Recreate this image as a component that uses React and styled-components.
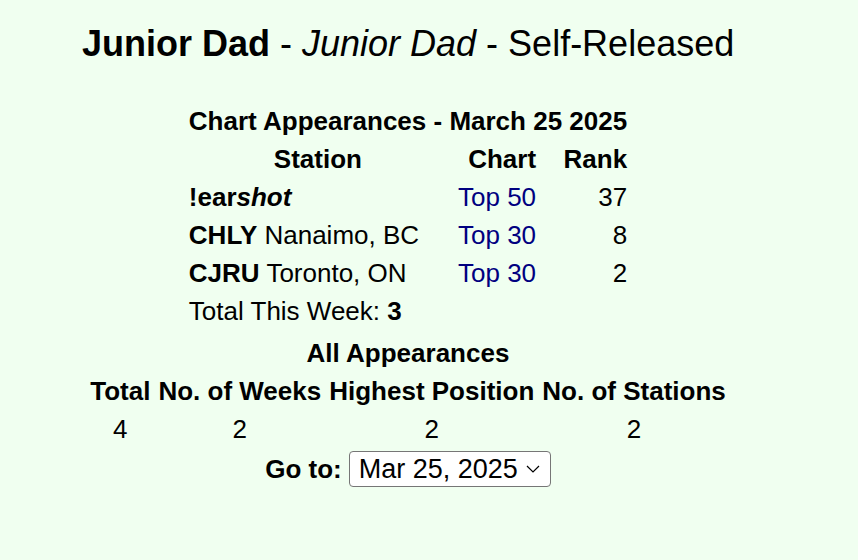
import React from "react";
import styled, { createGlobalStyle } from "styled-components";

const Global = createGlobalStyle`
  html, body { background: #f0fff0; }
  body { margin: 8px; font-family: "Liberation Sans", Arial, Helvetica, sans-serif; color: #000; }
`;

const Page = styled.div`
  width: 800px;
  display: flex;
  flex-direction: column;
  align-items: center;
`;

const Title = styled.h1`
  align-self: flex-start;
  margin: 16px 0 0 74px;
  font-size: 36px;
  font-weight: normal;
  line-height: 40px;
  white-space: nowrap;
`;

const Table = styled.table`
  border-collapse: collapse;
  border-spacing: 0;
  font-size: 26px;
  table-layout: ${(p) => (p.$fixed ? "fixed" : "auto")};
  width: ${(p) => (p.$width ? `${p.$width}px` : "auto")};
  margin-top: ${(p) => p.$mt || 0}px;
`;

const Caption = styled.caption`
  font-weight: bold;
  text-align: ${(p) => p.$align || "left"};
  padding: 5px 0;
  line-height: 28px;
  white-space: nowrap;
`;

const Col = styled.col`
  width: ${(p) => p.$w}px;
`;

const Th = styled.th`
  padding: 5px ${(p) => p.$px || 0}px;
  text-align: ${(p) => p.$align || "center"};
  white-space: nowrap;
  line-height: 28px;
`;

const Td = styled.td`
  padding: 5px ${(p) => p.$px || 0}px;
  text-align: ${(p) => p.$align || "left"};
  white-space: nowrap;
  line-height: 28px;
`;

const ChartLink = styled.a`
  color: #000080;
  text-decoration: none;
`;

const GoRow = styled.form`
  display: flex;
  align-items: center;
  gap: 7px;
  margin-top: 3px;
  font-size: 26px;
  font-weight: bold;
`;

const Select = styled.select`
  font-family: "Liberation Sans", Arial, sans-serif;
  font-size: 27px;
  width: 202px;
  height: 36px;
  padding: 0 0 0 9px;
  border: 1px solid #767676;
  border-radius: 4px;
  background: #fff url("data:image/svg+xml;utf8,<svg xmlns='http://www.w3.org/2000/svg' width='14' height='8' viewBox='0 0 14 8'><path d='M1 1l6 6 6-6' fill='none' stroke='black' stroke-width='1.2'/></svg>") no-repeat right 10px center;
  appearance: none;
  color: #000;
`;

const stations = [
  { call: "!ear", rest: "shot", italic: true, chart: "Top 50", rank: 37 },
  { call: "CHLY", rest: " Nanaimo, BC", chart: "Top 30", rank: 8 },
  { call: "CJRU", rest: " Toronto, ON", chart: "Top 30", rank: 2 },
];

export default function App() {
  return (
    <>
      <Global />
      <Page>
        <Title>
          <b>Junior Dad</b> - <i>Junior Dad</i> - Self-Released
        </Title>
        <Table $fixed $width={438} $mt={38}>
          <Caption>Chart Appearances - March 25 2025</Caption>
          <colgroup>
            <Col $w={258} />
            <Col $w={89} />
            <Col $w={91} />
          </colgroup>
          <thead>
            <tr>
              <Th>Station</Th>
              <Th $align="right">Chart</Th>
              <Th $align="right">Rank</Th>
            </tr>
          </thead>
          <tbody>
            {stations.map((s) => (
              <tr key={s.call}>
                <Td>
                  <b>{s.call}</b>
                  {s.italic ? (
                    <b>
                      <i>{s.rest}</i>
                    </b>
                  ) : (
                    s.rest
                  )}
                </Td>
                <Td $align="right">
                  <ChartLink href="#">{s.chart}</ChartLink>
                </Td>
                <Td $align="right">{s.rank}</Td>
              </tr>
            ))}
            <tr>
              <Td colSpan={3}>
                Total This Week: <b>3</b>
              </Td>
            </tr>
          </tbody>
        </Table>
        <Table $mt={4}>
          <Caption $align="center">All Appearances</Caption>
          <thead>
            <tr>
              <Th $px={4}>Total</Th>
              <Th $px={4}>No. of Weeks</Th>
              <Th $px={4}>Highest Position</Th>
              <Th $px={4}>No. of Stations</Th>
            </tr>
          </thead>
          <tbody>
            <tr>
              <Td $align="center">4</Td>
              <Td $align="center">2</Td>
              <Td $align="center">2</Td>
              <Td $align="center">2</Td>
            </tr>
          </tbody>
        </Table>
        <GoRow>
          Go to:
          <Select defaultValue="2025-03-25">
            <option value="2025-03-25">Mar 25, 2025</option>
          </Select>
        </GoRow>
      </Page>
    </>
  );
}
